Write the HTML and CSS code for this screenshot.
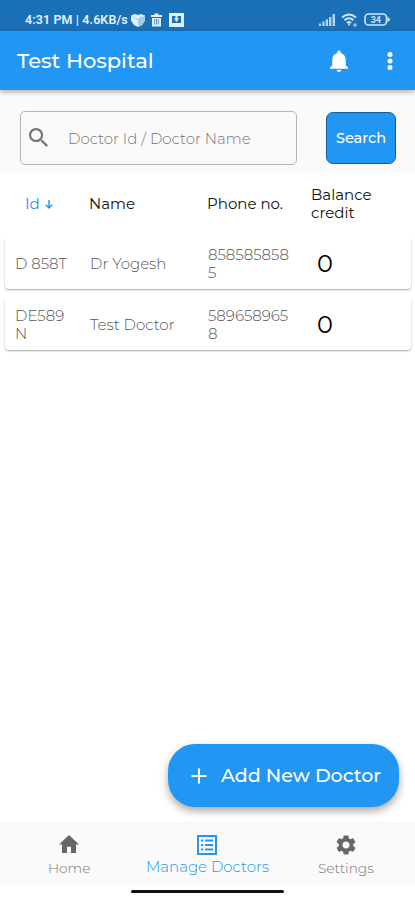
FILE: index.html
```html
<!DOCTYPE html>
<html lang="en">
<head>
    <meta charset="UTF-8">
    <meta name="viewport" content="width=device-width, initial-scale=1.0">
    <title>Test Hospital</title>
    <link rel="stylesheet" href="styles.css">
</head>
<body>

<div class="app">
    <div class="status-bar">
        <span class="status-time">4:31 PM | 4.6KB/s</span>
        <svg class="status-shield" width="14" height="14" viewBox="0 0 14 14">
            <path d="M0 2.500 4 1l3 1 3-1 4 1.500v5L11 12l-4 2-4-2-3-4.500z" fill="#e3f0fb"/>
            <path d="M7 6v8l4-2 3-4.500V3z" fill="#a3caea"/>
            <path d="M2 3.500l5 3.500 4-4" fill="none" stroke="#8fbde4" stroke-width=".8"/>
        </svg>
        <svg class="status-trash" width="11" height="14" viewBox="0 0 11 14">
            <path d="M0 2h3.500V.5h4V2H11v2H0zM1 5h9v8.500H1z" fill="#e3f0fb"/>
            <path d="M3.700 6v5.500M5.500 6v5.500M7.300 6v5.500" stroke="#1c70b5" stroke-width=".7"/>
        </svg>
        <svg class="status-app" width="15" height="14" viewBox="0 0 15 14">
            <path d="M0 0h15v14H0zM3 3v7h9V3z" fill="#e3f0fb" fill-rule="evenodd"/>
            <path d="M6.500 3h2v2.500H10L7.500 9 5 5.500h1.500z" fill="#e3f0fb"/>
        </svg>
        <div class="status-right">
            <svg width="16" height="12" viewBox="0 0 16 12">
                <path d="M0 12V9.500h2V12zM3.300 12V7.500h2.300V12zM6.700 12V5.500H9V12zM10 12V3h2.300v9zM13.500 12V0H16v12z" fill="#b4d3ee"/>
            </svg>
            <svg width="17" height="14" viewBox="0 0 17 14">
                <path d="M1 4.500q7-6 14 0M3.500 7.300q4.500-4 9 0M6 10q2-2 4 0" fill="none" stroke="#cfe3f5" stroke-width="2"/>
                <path d="M6.500 10.500h3L8 13z" fill="#cfe3f5"/>
                <circle cx="14" cy="12" r="1.800" fill="#8fbde4"/>
            </svg>
            <svg width="27" height="13" viewBox="0 0 27 13">
                <rect x="1" y="1" width="21.500" height="11" rx="3.500" fill="none" stroke="#cfe3f5" stroke-width="1.700"/>
                <path d="M23.500 3.500 26.500 6.500l-3 3z" fill="#cfe3f5"/>
                <text class="battery-text" x="11.800" y="9.800" text-anchor="middle">34</text>
            </svg>
        </div>
    </div>

    <header class="toolbar">
        <h1 class="toolbar-title">Test Hospital</h1>
        <svg class="toolbar-bell" width="18" height="22" viewBox="4 2 16 20" preserveAspectRatio="none">
            <path d="M12 22c1.100 0 2-.9 2-2h-4c0 1.100.89 2 2 2zm6-6v-5c0-3.070-1.640-5.640-4.500-6.320V4c0-.83-.67-1.500-1.500-1.500s-1.500.67-1.500 1.500v.68C7.630 5.360 6 7.920 6 11v5l-2 2v1h16v-1l-2-2z" fill="#fff"/>
        </svg>
        <svg width="6" height="20" viewBox="0 0 6 20">
            <circle cx="3" cy="3.500" r="2.500" fill="#fff"/>
            <circle cx="3" cy="10" r="2.500" fill="#fff"/>
            <circle cx="3" cy="16.500" r="2.500" fill="#fff"/>
        </svg>
    </header>

    <div class="search">
        <div class="search-field">
            <svg width="19" height="19" viewBox="3 3 17.500 17.500">
                <path d="M15.500 14h-.79l-.28-.27C15.410 12.590 16 11.110 16 9.500 16 5.910 13.090 3 9.500 3S3 5.910 3 9.500 5.910 16 9.500 16c1.610 0 3.090-.59 4.230-1.570l.27.280v.79l5 4.990L20.490 19l-4.990-5zm-6 0C7.010 14 5 11.990 5 9.500S7.010 5 9.500 5 14 7.010 14 9.500 11.990 14 9.500 14z" fill="#757575"/>
            </svg>
            <span class="search-hint">Doctor Id / Doctor Name</span>
        </div>
        <button class="search-button">Search</button>
    </div>

    <div class="row table-head">
        <div class="col-id sorted">Id
            <svg width="8" height="9" viewBox="0 0 8 9">
                <path d="M4 0v8M.8 4.800 4 8l3.200-3.200" fill="none" stroke="#2196f3" stroke-width="1.400"/>
            </svg>
        </div>
        <div class="col-name">Name</div>
        <div class="col-phone">Phone no.</div>
        <div class="col-balance">Balance<br>credit</div>
    </div>

    <div class="list">
        <div class="row card">
            <div class="col-id">D 858T</div>
            <div class="col-name">Dr Yogesh</div>
            <div class="col-phone">858585858<br>5</div>
            <div class="col-balance">0</div>
        </div>
        <div class="row card">
            <div class="col-id">DE589<br>N</div>
            <div class="col-name">Test Doctor</div>
            <div class="col-phone">589658965<br>8</div>
            <div class="col-balance">0</div>
        </div>
    </div>

    <button class="fab">
        <svg width="16" height="16" viewBox="0 0 16 16">
            <path d="M8 .5v15M.5 8h15" stroke="#fff" stroke-width="2"/>
        </svg>
        <span class="fab-text">Add New Doctor</span>
    </button>

    <nav class="bottom-nav">
        <div class="nav-item">
            <svg width="20" height="18" viewBox="2 3 20 17" preserveAspectRatio="none">
                <path d="M10 20v-6h4v6h5v-8h3L12 3 2 12h3v8z" fill="#666"/>
            </svg>
            <span class="nav-home">Home</span>
        </div>
        <div class="nav-item nav-active">
            <svg width="20" height="20" viewBox="0 0 20 20">
                <rect x="1" y="1" width="18" height="18" fill="none" stroke="#2196f3" stroke-width="2"/>
                <path d="M4 5.500h2.200M8 5.500h8M4 10h2.200M8 10h8M4 14.500h2.200M8 14.500h8" stroke="#2196f3" stroke-width="2"/>
            </svg>
            <span class="nav-doctors">Manage Doctors</span>
        </div>
        <div class="nav-item">
            <svg width="20" height="20" viewBox="2 2 20 20">
                <path d="M19.140 12.940c.04-.3.060-.61.060-.94 0-.32-.02-.64-.07-.94l2.030-1.580c.18-.14.230-.41.120-.61l-1.920-3.320c-.12-.22-.37-.29-.59-.22l-2.390.96c-.5-.38-1.030-.7-1.620-.94L14.400 2.810c-.04-.24-.24-.41-.48-.41h-3.840c-.24 0-.43.170-.47.410L9.250 5.350c-.59.240-1.130.570-1.620.94l-2.390-.96c-.22-.08-.47 0-.59.220L2.740 8.870c-.12.210-.08.470.120.610l2.030 1.580c-.05.300-.09.630-.09.940s.02.640.070.940l-2.030 1.580c-.18.140-.23.410-.12.610l1.920 3.320c.12.220.37.290.59.220l2.390-.96c.5.380 1.030.700 1.620.940l.36 2.540c.05.240.24.410.48.410h3.840c.24 0 .44-.17.470-.41l.36-2.540c.59-.24 1.130-.56 1.620-.94l2.390.96c.22.080.47 0 .59-.22l1.920-3.320c.12-.22.070-.47-.12-.61l-2.010-1.580zM12 15.600c-1.980 0-3.600-1.620-3.600-3.600s1.620-3.600 3.600-3.600 3.600 1.620 3.600 3.600-1.620 3.600-3.600 3.600z" fill="#666"/>
            </svg>
            <span>Settings</span>
        </div>
    </nav>
    <div class="gesture-bar"></div>
</div>

</body>
</html>
```
FILE: styles.css
```css
* {
    box-sizing: border-box;
}

body {
    margin: 0;
    background-color: #fff;
    font-family: Montserrat, Inter, "Open Sans", sans-serif;
}

svg {
    display: block;
    flex-shrink: 0;
}

.app {
    width: 415px;
    height: 900px;
    display: flex;
    flex-direction: column;
    overflow: hidden;
}

.status-bar {
    height: 31px;
    flex-shrink: 0;
    display: flex;
    align-items: center;
    padding: 8px 24px 0 25px;
    background-color: #1a70b6;
    color: #e3f0fb;
}

.status-time {
    width: 104px;
    font-family: Roboto, sans-serif;
    font-size: 12.5px;
    font-weight: 600;
    white-space: nowrap;
    letter-spacing: 0.1px;
}

.status-shield {
    margin-left: 2px;
}

.status-trash {
    margin-left: 6px;
}

.status-app {
    margin-left: 7px;
}

.status-right {
    display: flex;
    align-items: center;
    gap: 6px;
    margin-left: auto;
}

.battery-text {
    fill: #cfe3f5;
    font-family: Roboto, sans-serif;
    font-size: 9px;
    font-weight: 700;
}

.toolbar {
    height: 59px;
    flex-shrink: 0;
    display: flex;
    align-items: center;
    padding: 0 22px 0 17px;
    background-color: #2196f3;
    box-shadow: 0 2px 5px rgba(0, 0, 0, 0.3);
    position: relative;
    z-index: 1;
}

.toolbar-title {
    margin: 0;
    flex: 1;
    color: #fff;
    font-size: 21px;
    font-weight: 500;
}

.toolbar-bell {
    margin-right: 39px;
}

.search {
    height: 83px;
    flex-shrink: 0;
    display: flex;
    align-items: flex-start;
    justify-content: space-between;
    padding: 21px 19px 0 20px;
    background-color: #fafafa;
}

.search-field {
    width: 277px;
    height: 54px;
    display: flex;
    align-items: center;
    gap: 20px;
    padding-left: 8px;
    border: 1px solid #b5b5b5;
    border-radius: 5px;
}

.search-field svg {
    margin-bottom: 2px;
}

.search-hint {
    padding-top: 1px;
    color: #757575;
    font-size: 15px;
    font-weight: 300;
    white-space: nowrap;
}

.search-button {
    width: 70px;
    height: 52px;
    margin-top: 1px;
    padding: 0;
    border: 1px solid #195d96;
    border-radius: 7px;
    background-color: #2196f3;
    color: #fff;
    font-family: inherit;
    font-size: 14.5px;
    font-weight: 500;
}

.row {
    display: flex;
    align-items: center;
    line-height: 18px;
}

.table-head {
    height: 62px;
    flex-shrink: 0;
    padding-left: 25px;
    color: #111;
    font-size: 15px;
}

.table-head .col-id {
    width: 64px;
}

.table-head .col-name {
    width: 118px;
}

.table-head .col-phone {
    width: 104px;
}

.table-head .col-balance {
    padding-bottom: 1px;
}

.table-head .sorted {
    display: flex;
    align-items: center;
    gap: 5px;
    color: #2196f3;
}

.list {
    flex: 1;
    padding: 0 4px 0 5px;
}

.card {
    height: 54px;
    margin-bottom: 7px;
    padding: 4px 0 0 10px;
    border-radius: 4px;
    background-color: #fff;
    box-shadow: 0 1px 2px rgba(0, 0, 0, 0.35);
    color: #555;
    font-size: 15px;
    font-weight: 300;
    clip-path: inset(4px -3px -4px -3px);
}

.card .col-id {
    width: 75px;
}

.card .col-name {
    width: 118px;
}

.card .col-phone {
    width: 109px;
}

.card .col-balance {
    color: #000;
    font-size: 24px;
    font-weight: 400;
}

.fab {
    width: 231px;
    height: 63px;
    flex-shrink: 0;
    align-self: flex-end;
    display: flex;
    align-items: center;
    gap: 14px;
    margin: 0 16px 16px 0;
    padding: 0 0 0 23px;
    border: none;
    border-radius: 27px;
    background-color: #2196f3;
    box-shadow: 0 4px 8px rgba(0, 0, 0, 0.35);
    color: #fff;
    font-family: inherit;
    position: relative;
    z-index: 1;
}

.fab-text {
    font-size: 19px;
    font-weight: 500;
    white-space: nowrap;
}

.bottom-nav {
    height: 61px;
    flex-shrink: 0;
    display: flex;
    background-color: #fafafa;
    box-shadow: 0 -1px 2px rgba(0, 0, 0, 0.05);
}

.nav-item {
    flex: 1;
    display: flex;
    flex-direction: column;
    align-items: center;
    justify-content: flex-start;
    padding-top: 12px;
    color: #757575;
    font-size: 13.7px;
    font-weight: 300;
    line-height: 18px;
    white-space: nowrap;
}

.nav-item svg {
    margin-bottom: 4px;
}

.nav-home {
    padding-top: 2px;
}

.nav-active {
    color: #2196f3;
    font-size: 15px;
}

.nav-doctors {
    margin-top: -1px;
}

.gesture-bar {
    width: 153px;
    height: 3px;
    flex-shrink: 0;
    align-self: center;
    margin: 6px 0 7px;
    border-radius: 2px;
    background-color: #111;
}
```
